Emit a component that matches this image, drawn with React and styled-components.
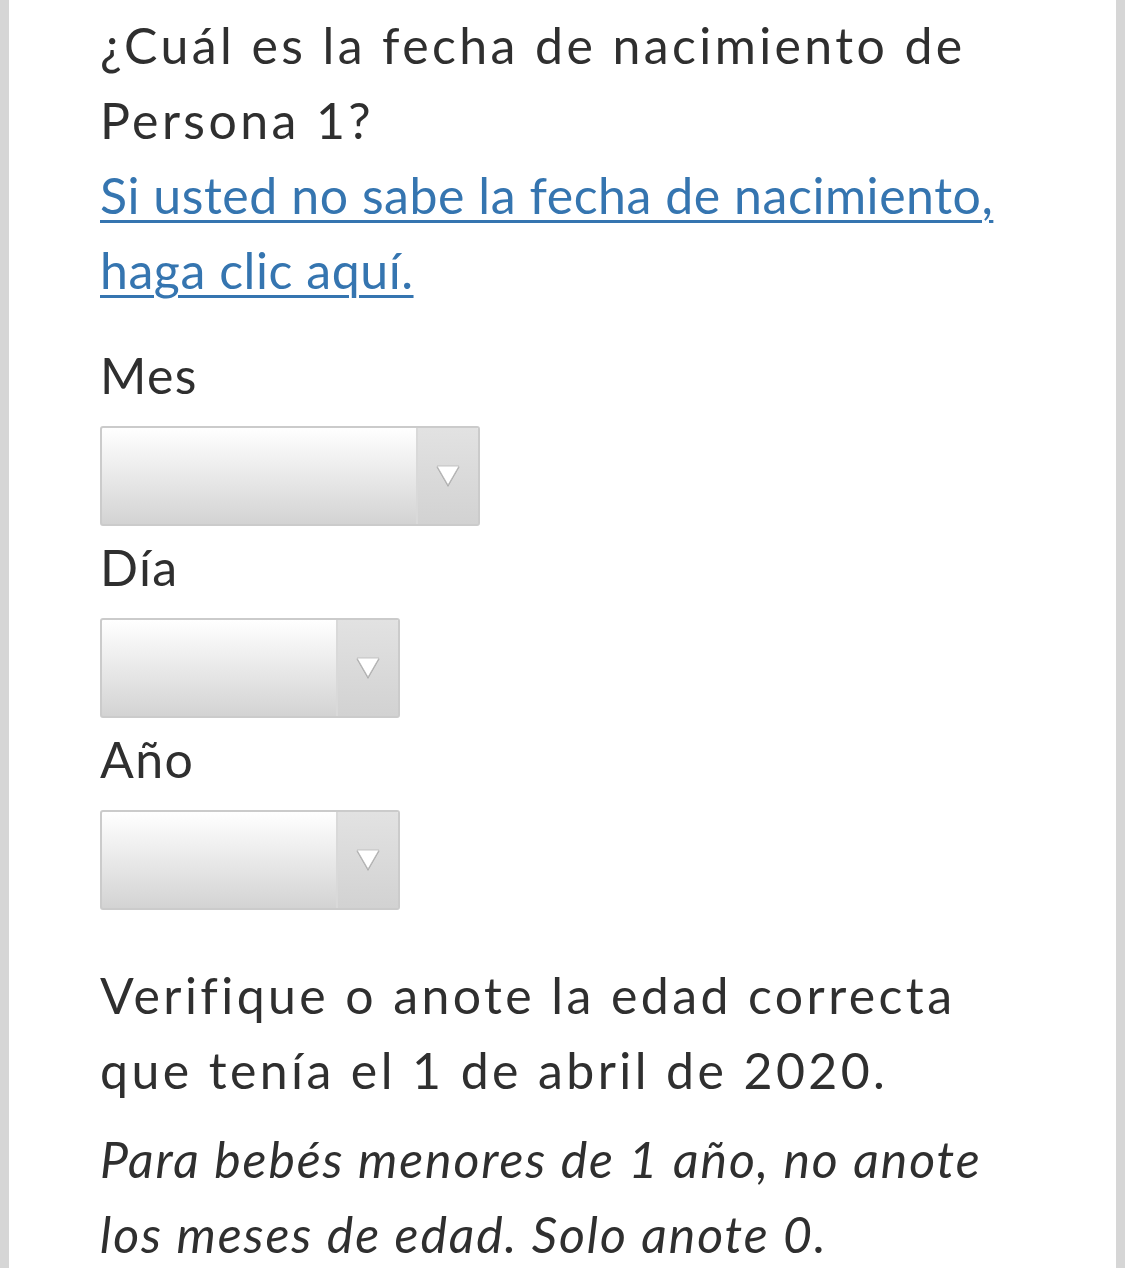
import React from 'react'
import styled, { createGlobalStyle } from 'styled-components'

const GlobalStyle = createGlobalStyle`
    html, body {
        margin: 0;
        padding: 0;
        background: #d6d6d6;
    }
`

const Page = styled.main`
    margin: 0 9px;
    min-height: 1268px;
    background: #fff;
    padding: 8px 0 0 91px;
    box-sizing: border-box;
    font-family: Lato, "Noto Sans", sans-serif;
    color: #2f2f2f;
`

const Content = styled.div`
    width: 920px;
`

const Question = styled.h1`
    margin: 0;
    font-size: 50px;
    font-weight: 400;
    line-height: 75px;
    letter-spacing: 3.4px;
`

const HelpLink = styled.a`
    display: block;
    font-size: 50px;
    line-height: 75px;
    letter-spacing: 0.55px;
    color: #3575b0;
    text-decoration: underline;
    text-decoration-thickness: 3px;
    text-underline-offset: 6px;
`

const Field = styled.div`
    display: flex;
    flex-direction: column;
    align-items: flex-start;
    margin-top: ${p => p.$top}px;
`

const Label = styled.label`
    font-size: 50px;
    line-height: 75px;
    letter-spacing: 1.4px;
`

const Select = styled.div`
    display: flex;
    width: ${p => p.$width}px;
    height: 100px;
    margin-top: 13px;
    box-sizing: border-box;
    border: 2px solid #cbcbcb;
    border-radius: 3px;
    background: linear-gradient(#ffffff, #d3d3d3);
    overflow: hidden;
`

const SelectValue = styled.div`
    flex: 1;
`

const SelectArrow = styled.div`
    width: 60px;
    display: flex;
    align-items: center;
    justify-content: center;
    border-left: 2px solid #d9d9d9;
    background: linear-gradient(#e2e2e2, #d2d2d2);

    svg {
        width: 28px;
        height: 26px;
        flex-shrink: 0;
    }
`

const Instruction = styled.p`
    margin: 48px 0 0;
    font-size: 50px;
    line-height: 75px;
    letter-spacing: 3.4px;
`

const Note = styled.p`
    margin: 14px 0 0;
    font-size: 50px;
    line-height: 75px;
    letter-spacing: 1.9px;
    font-style: italic;
`

const Arrow = () => (
    <svg viewBox="0 0 28 26">
        <polygon points="2.5,4 25.5,4 14,24" fill="#a8a8a8" />
        <polygon points="3,3 25,3 14,22" fill="#fff" stroke="#b8b8b8" strokeWidth="0.8" strokeLinejoin="round" />
    </svg>
)

const DateSelect = ({ label, width, top }) => (
    <Field $top={top}>
        <Label>{label}</Label>
        <Select $width={width}>
            <SelectValue />
            <SelectArrow>
                <Arrow />
            </SelectArrow>
        </Select>
    </Field>
)

const App = () => (
    <>
        <GlobalStyle />
        <Page>
            <Content>
                <Question>¿Cuál es la fecha de nacimiento de Persona 1?</Question>
                <HelpLink href="#">Si usted no sabe la fecha de nacimiento, haga clic aquí.</HelpLink>
                <DateSelect label="Mes" width={380} top={30} />
                <DateSelect label="Día" width={300} top={4} />
                <DateSelect label="Año" width={300} top={4} />
                <Instruction>Verifique o anote la edad correcta que tenía el 1 de abril de 2020.</Instruction>
                <Note>Para bebés menores de 1 año, no anote los meses de edad. Solo anote 0.</Note>
            </Content>
        </Page>
    </>
)

export default App
